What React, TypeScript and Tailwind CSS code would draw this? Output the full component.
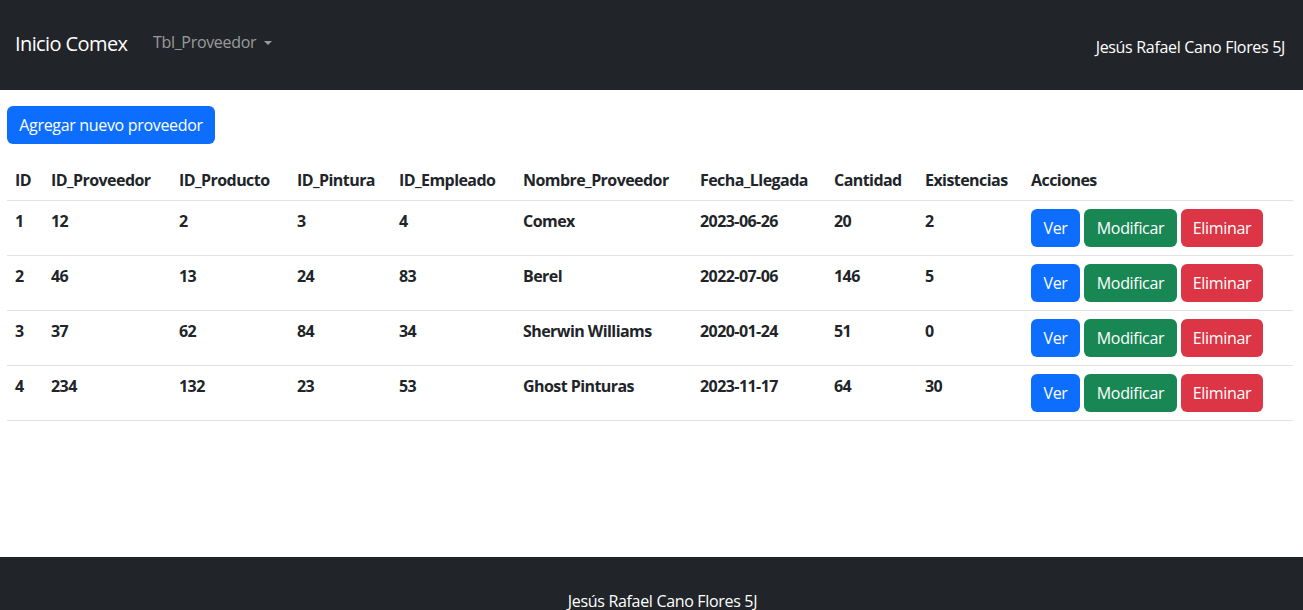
import React from "react";

const font = { fontFamily: '"Open Sans", "Liberation Sans", sans-serif' };

const rows = [
  ["1", "12", "2", "3", "4", "Comex", "2023-06-26", "20", "2"],
  ["2", "46", "13", "24", "83", "Berel", "2022-07-06", "146", "5"],
  ["3", "37", "62", "84", "34", "Sherwin Williams", "2020-01-24", "51", "0"],
  ["4", "234", "132", "23", "53", "Ghost Pinturas", "2023-11-17", "64", "30"],
];

const headers = [
  "ID",
  "ID_Proveedor",
  "ID_Producto",
  "ID_Pintura",
  "ID_Empleado",
  "Nombre_Proveedor",
  "Fecha_Llegada",
  "Cantidad",
  "Existencias",
  "Acciones",
];

const widths = ["w-[36px]", "w-[128px]", "w-[118px]", "w-[102px]", "w-[124px]", "w-[177px]", "w-[134px]", "w-[91px]", "w-[106px]", "w-[270px]"];

export default function App() {
  return (
    <div className="min-h-screen bg-white text-[#212529] text-[16px] leading-6 tracking-[-0.02em]" style={font}>
      <nav className="h-[90px] bg-[#212529] flex items-center pl-[15px] pr-[18px]">
        <div className="w-[138px] text-[20px] leading-[30px] text-white -mt-[3px] whitespace-nowrap tracking-[-0.03em]">Inicio Comex</div>
        <div className="flex items-center text-[rgba(255,255,255,0.55)] -mt-[6px] whitespace-nowrap">
          <span>Tbl_Proveedor</span>
          <span className="ml-[8px] mt-[1px] inline-block w-0 h-0 border-t-[4px] border-t-[rgba(255,255,255,0.55)] border-x-[4px] border-x-transparent"></span>
        </div>
        <div className="ml-auto text-white mt-[4px] whitespace-nowrap">Jesús Rafael Cano Flores 5J</div>
      </nav>
      <main className="h-[467px] px-[7px] pt-[16px]">
        <button className="h-[38px] w-[208px] rounded-[6px] bg-[#0d6efd] text-white text-[16px] leading-6 whitespace-nowrap">
          Agregar nuevo proveedor
        </button>
        <table className="mt-[16px] w-[1286px] table-fixed border-collapse">
          <thead>
            <tr className="border-b border-[#dee2e6]">
              {headers.map((h, i) => (
                <th key={h} className={`${widths[i]} p-2 text-left font-bold whitespace-nowrap align-top tracking-[-0.035em]`}>
                  {h}
                </th>
              ))}
            </tr>
          </thead>
          <tbody>
            {rows.map((r) => (
              <tr key={r[0]} className="border-b border-[#dee2e6]">
                {r.map((c, i) => (
                  <td key={i} className="p-2 font-bold align-top whitespace-nowrap tracking-[-0.035em]">
                    {c}
                  </td>
                ))}
                <td className="p-2 align-top">
                  <div className="flex gap-[4px]">
                    <button className="h-[38px] w-[49px] rounded-[6px] bg-[#0d6efd] text-white">Ver</button>
                    <button className="h-[38px] w-[93px] rounded-[6px] bg-[#198754] text-white">Modificar</button>
                    <button className="h-[38px] w-[82px] rounded-[6px] bg-[#dc3545] text-white">Eliminar</button>
                  </div>
                </td>
              </tr>
            ))}
          </tbody>
        </table>
      </main>
      <footer className="bg-[#212529] text-white text-center pt-[32px] pb-[32px] pl-[22px]">
        Jesús Rafael Cano Flores 5J
      </footer>
    </div>
  );
}
